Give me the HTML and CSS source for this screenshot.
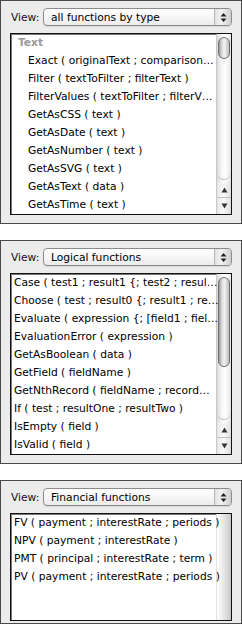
FILE: index.html
```html
<!DOCTYPE html>
<html lang="en">
<head>
    <meta charset="utf-8">
    <title>Functions</title>
    <link rel="stylesheet" href="styles.css">
</head>
<body>
    <!-- all functions by type -->
    <div class="panel">
        <div class="view-row">
            <span class="view-label">View:</span>
            <div class="popup">
                <span class="popup-text">all functions by type</span>
                <span class="popup-arrows">
                    <svg width="7" height="11" viewBox="0 0 7 11"><path d="M3.5 1 L6.5 4.5 L0.5 4.5 Z M3.5 10 L6.5 6.5 L0.5 6.5 Z" fill="#222"/></svg>
                </span>
            </div>
        </div>
        <div class="list list-tall">
            <ul class="items">
                <li class="group">Text</li>
                <li class="sub">Exact ( originalText ; comparison…</li>
                <li class="sub">Filter ( textToFilter ; filterText )</li>
                <li class="sub">FilterValues ( textToFilter ; filterV…</li>
                <li class="sub">GetAsCSS ( text )</li>
                <li class="sub">GetAsDate ( text )</li>
                <li class="sub">GetAsNumber ( text )</li>
                <li class="sub">GetAsSVG ( text )</li>
                <li class="sub">GetAsText ( data )</li>
                <li class="sub">GetAsTime ( text )</li>
            </ul>
            <div class="scroll">
                <div class="thumb thumb-short"></div>
                <div class="track"></div>
                <div class="btn-up"><svg width="7" height="6" viewBox="0 0 7 6"><path d="M3.5 0.5 L6.5 5.5 L0.5 5.5 Z" fill="#333"/></svg></div>
                <div class="btn-down"><svg width="7" height="6" viewBox="0 0 7 6"><path d="M3.5 5.5 L6.5 0.5 L0.5 0.5 Z" fill="#333"/></svg></div>
            </div>
        </div>
    </div>

    <!-- logical -->
    <div class="panel">
        <div class="view-row">
            <span class="view-label">View:</span>
            <div class="popup">
                <span class="popup-text">Logical functions</span>
                <span class="popup-arrows">
                    <svg width="7" height="11" viewBox="0 0 7 11"><path d="M3.5 1 L6.5 4.5 L0.5 4.5 Z M3.5 10 L6.5 6.5 L0.5 6.5 Z" fill="#222"/></svg>
                </span>
            </div>
        </div>
        <div class="list list-tall">
            <ul class="items">
                <li>Case ( test1 ; result1 {; test2 ; resul…</li>
                <li>Choose ( test ; result0 {; result1 ; re…</li>
                <li>Evaluate ( expression {; [field1 ; fiel…</li>
                <li>EvaluationError ( expression )</li>
                <li>GetAsBoolean ( data )</li>
                <li>GetField ( fieldName )</li>
                <li>GetNthRecord ( fieldName ; record…</li>
                <li>If ( test ; resultOne ; resultTwo )</li>
                <li>IsEmpty ( field )</li>
                <li>IsValid ( field )</li>
            </ul>
            <div class="scroll">
                <div class="thumb thumb-long"></div>
                <div class="track"></div>
                <div class="btn-up"><svg width="7" height="6" viewBox="0 0 7 6"><path d="M3.5 0.5 L6.5 5.5 L0.5 5.5 Z" fill="#333"/></svg></div>
                <div class="btn-down"><svg width="7" height="6" viewBox="0 0 7 6"><path d="M3.5 5.5 L6.5 0.5 L0.5 0.5 Z" fill="#333"/></svg></div>
            </div>
        </div>
    </div>

    <!-- financial -->
    <div class="panel panel-last">
        <div class="view-row">
            <span class="view-label">View:</span>
            <div class="popup">
                <span class="popup-text">Financial functions</span>
                <span class="popup-arrows">
                    <svg width="7" height="11" viewBox="0 0 7 11"><path d="M3.5 1 L6.5 4.5 L0.5 4.5 Z M3.5 10 L6.5 6.5 L0.5 6.5 Z" fill="#222"/></svg>
                </span>
            </div>
        </div>
        <div class="list list-short">
            <ul class="items">
                <li>FV ( payment ; interestRate ; periods )</li>
                <li>NPV ( payment ; interestRate )</li>
                <li>PMT ( principal ; interestRate ; term )</li>
                <li>PV ( payment ; interestRate ; periods )</li>
            </ul>
            <div class="scroll scroll-empty"></div>
        </div>
    </div>
</body>
</html>
```

FILE: styles.css
```css
* {
    margin: 0;
    padding: 0;
    box-sizing: border-box;
}
body {
    background: #fff;
    font-family: "DejaVu Sans", "Liberation Sans", sans-serif;
    font-size: 10.7px;
    color: #000;
}
.panel {
    border: 1px solid #4a4a4a;
    background: #ececec;
    padding: 7px 9px 8px 9px;
    margin-bottom: 16px;
}
.panel-last {
    margin-bottom: 0;
    padding-bottom: 2px;
}
.view-row {
    display: flex;
    align-items: center;
    height: 18px;
}
.view-label {
    width: 33px;
    padding-left: 1px;
    color: #111;
}
.popup {
    flex: 1;
    height: 18px;
    display: flex;
    align-items: center;
    border: 1px solid #8c8c8c;
    border-radius: 4px;
    background: linear-gradient(#ffffff, #f6f6f6 50%, #ececec);
    box-shadow: 0 1px 0 #d8d8d8;
}
.popup-text {
    flex: 1;
    padding-left: 7px;
    white-space: nowrap;
}
.popup-arrows {
    width: 17px;
    height: 16px;
    display: flex;
    align-items: center;
    justify-content: center;
    border-left: 1px solid #b4b4b4;
    border-radius: 0 3px 3px 0;
    background: linear-gradient(to right, #e2e2e2, #f2f2f2 40%, #cfcfcf);
}
.list {
    margin-top: 7px;
    display: flex;
    border: 1px solid #111;
    background: #fff;
    box-shadow: inset 1px 1px 0 #777;
}
.list-tall {
    height: 182px;
}
.list-short {
    height: 108px;
}
/* text may run over the empty scroll track, as in the original */
.items {
    flex: 1;
    min-width: 0;
    list-style: none;
    position: relative;
    z-index: 1;
}
.items li {
    height: 18px;
    line-height: 18px;
    padding-left: 3px;
    white-space: nowrap;
}
.items li.group {
    color: #9a9a9a;
    font-weight: bold;
    padding-left: 7px;
}
.items li.sub {
    padding-left: 17px;
}
.scroll {
    width: 15px;
    flex-shrink: 0;
    display: flex;
    flex-direction: column;
    border-left: 1px solid #c8c8c8;
    background: linear-gradient(to right, #dadada, #f7f7f7 35%, #ffffff 60%, #e4e4e4);
}
.scroll-empty {
    background: linear-gradient(to right, #ffffff, #f0f0f0 30%, #d6d6d6 80%, #c4c4c4);
    border-left: 1px solid #e2e2e2;
}
.thumb {
    margin: 3px 1px 0 1px;
    border: 1px solid #6f6f6f;
    border-radius: 7px;
    background: linear-gradient(to right, #9a9a9a, #dcdcdc 30%, #f2f2f2 55%, #bdbdbd);
}
.thumb-short {
    height: 22px;
}
.thumb-long {
    height: 90px;
}
.track {
    flex: 1;
    border-bottom: 1px solid #bdbdbd;
    border-radius: 0 0 7px 7px;
}
.btn-up,
.btn-down {
    height: 16px;
    display: flex;
    align-items: center;
    justify-content: center;
    background: linear-gradient(to right, #e6e6e6, #fafafa 45%, #dedede);
}
.btn-up {
    margin-top: 2px;
    border-bottom: 1px solid #c4c4c4;
}
```
